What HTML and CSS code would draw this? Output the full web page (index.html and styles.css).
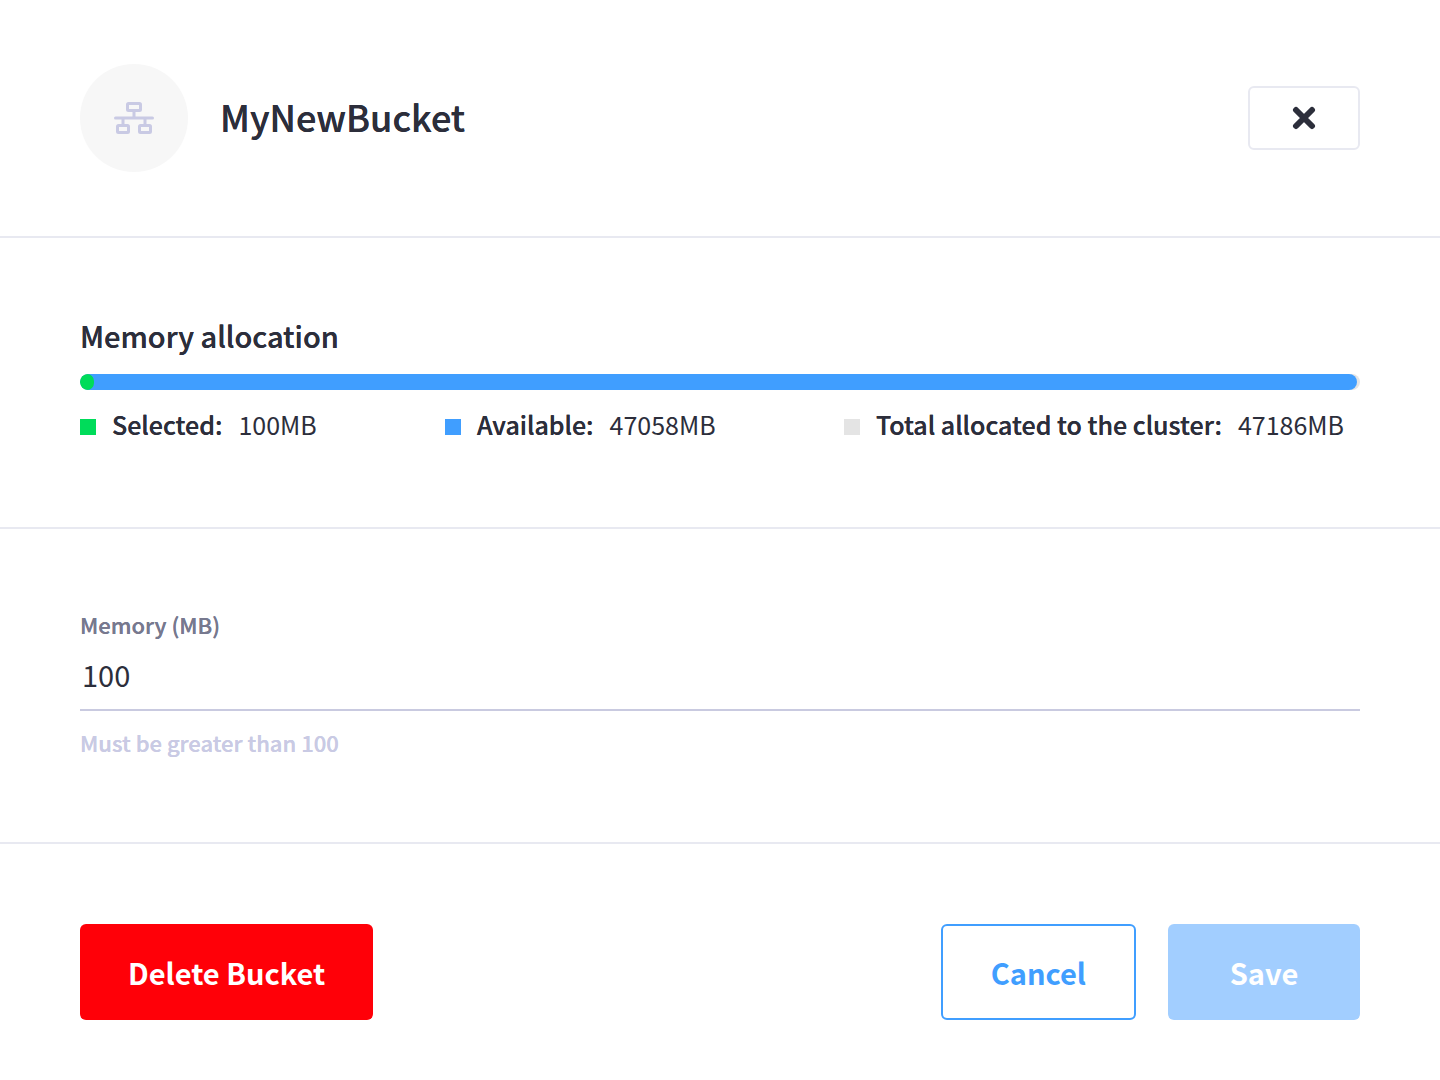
FILE: index.html
```html
<!DOCTYPE html>
<html lang="en">
<head>
<meta charset="utf-8">
<title>MyNewBucket</title>
<link rel="stylesheet" href="styles.css">
</head>
<body>
<main class="dialog">
  <header class="section header">
    <span class="avatar">
      <svg width="40" height="32" viewBox="0 0 40 32" fill="none" stroke="#c9cae4" stroke-width="3" stroke-linecap="round" aria-hidden="true">
        <rect x="13.500" y="1.500" width="13" height="7" rx="1"/>
        <rect x="3.500" y="23.500" width="11" height="7" rx="1"/>
        <rect x="25.500" y="23.500" width="11" height="7" rx="1"/>
        <path d="M1.500 16H38.500M20 10V16M9 16V22M31 16V22"/>
      </svg>
    </span>
    <h1 class="title">MyNewBucket</h1>
    <button class="close" type="button" aria-label="Close">
      <svg width="24" height="24" viewBox="0 0 24 24" stroke="#2c2e3b" stroke-width="6" stroke-linecap="round" aria-hidden="true"><path d="M4 4L20 20M20 4L4 20"/></svg>
    </button>
  </header>
  <section class="section body">
    <h2 class="subtitle">Memory allocation</h2>
    <div class="bar"><div class="bar-available"></div><div class="bar-selected"></div></div>
    <ul class="legend">
      <li class="item"><span class="swatch selected"></span><span class="key">Selected:</span><span>100MB</span></li>
      <li class="item"><span class="swatch available"></span><span class="key">Available:</span><span>47058MB</span></li>
      <li class="item"><span class="swatch total"></span><span class="key">Total allocated to the cluster:</span><span>47186MB</span></li>
    </ul>
  </section>
  <section class="section body">
    <label class="label" for="memory">Memory (MB)</label>
    <input class="input" id="memory" type="text" value="100">
    <p class="hint">Must be greater than 100</p>
  </section>
  <footer class="section actions">
    <button class="button delete" type="button">Delete Bucket</button>
    <button class="button cancel" type="button">Cancel</button>
    <button class="button save" type="button">Save</button>
  </footer>
</main>
</body>
</html>
```
FILE: styles.css
```css
* { box-sizing: border-box; }
body { margin: 0; background: #fff; color: #2c2e3b; font-family: "Noto Sans CJK SC", "Noto Sans", sans-serif; }
.section { padding: 80px; border-bottom: 2px solid #e8e9f1; }
.body { padding-bottom: 85px; }
.header { display: flex; align-items: center; gap: 32px; padding: 64px 80px; }
.avatar { display: flex; align-items: center; justify-content: center; width: 108px; height: 108px; border-radius: 50%; background: #f7f7f7; }
.title, .subtitle, .key, .label, .hint { font-weight: 500; text-shadow: 0 0 0 currentColor; }
.title { margin: 0; padding-bottom: 4px; font-size: 36px; line-height: 48px; }
.close { display: flex; align-items: center; justify-content: center; width: 112px; height: 64px; margin-left: auto; padding: 0; border: 2px solid #e8e9f1; border-radius: 6px; background: #fff; }
.subtitle { margin: 0 0 22px; font-size: 29px; line-height: 34px; }
.bar { display: grid; height: 16px; border-radius: 8px; background: #e4e4e4; overflow: hidden; }
.bar > div { grid-area: 1 / 1; border-radius: 8px; }
.bar-available { margin-right: 3px; background: #409eff; }
.bar-selected { width: 14px; background: #00dc5a; }
.legend { display: flex; justify-content: space-between; margin: 16px 0 0; padding: 0 16px 0 0; list-style: none; font-size: 25px; line-height: 36px; }
.item { display: flex; align-items: center; gap: 16px; }
.swatch { width: 16px; height: 16px; margin-top: 6px; }
.selected { background: #00dc5a; }
.available { background: #409eff; }
.total { background: #e4e4e4; }
.label { display: block; font-size: 22px; line-height: 30px; color: #77798f; }
.input { display: block; width: 100%; height: 72px; padding: 0 2px; border: 0; border-bottom: 2px solid #c9cae0; font: inherit; font-size: 29px; color: inherit; background: none; }
.hint { margin: 16px 0 0; font-size: 22px; line-height: 30px; color: #c9cae4; }
.actions { display: flex; gap: 32px; border: 0; }
.button { height: 96px; padding: 0 46px; border: 2px solid transparent; border-radius: 6px; font: inherit; font-size: 29px; font-weight: 700; color: #fff; }
.delete { margin-right: auto; background: #ff0008; }
.cancel { padding: 0 48px; border-color: #409eff; color: #409eff; background: #fff; }
.save { min-width: 192px; background: #a2ceff; }
```
